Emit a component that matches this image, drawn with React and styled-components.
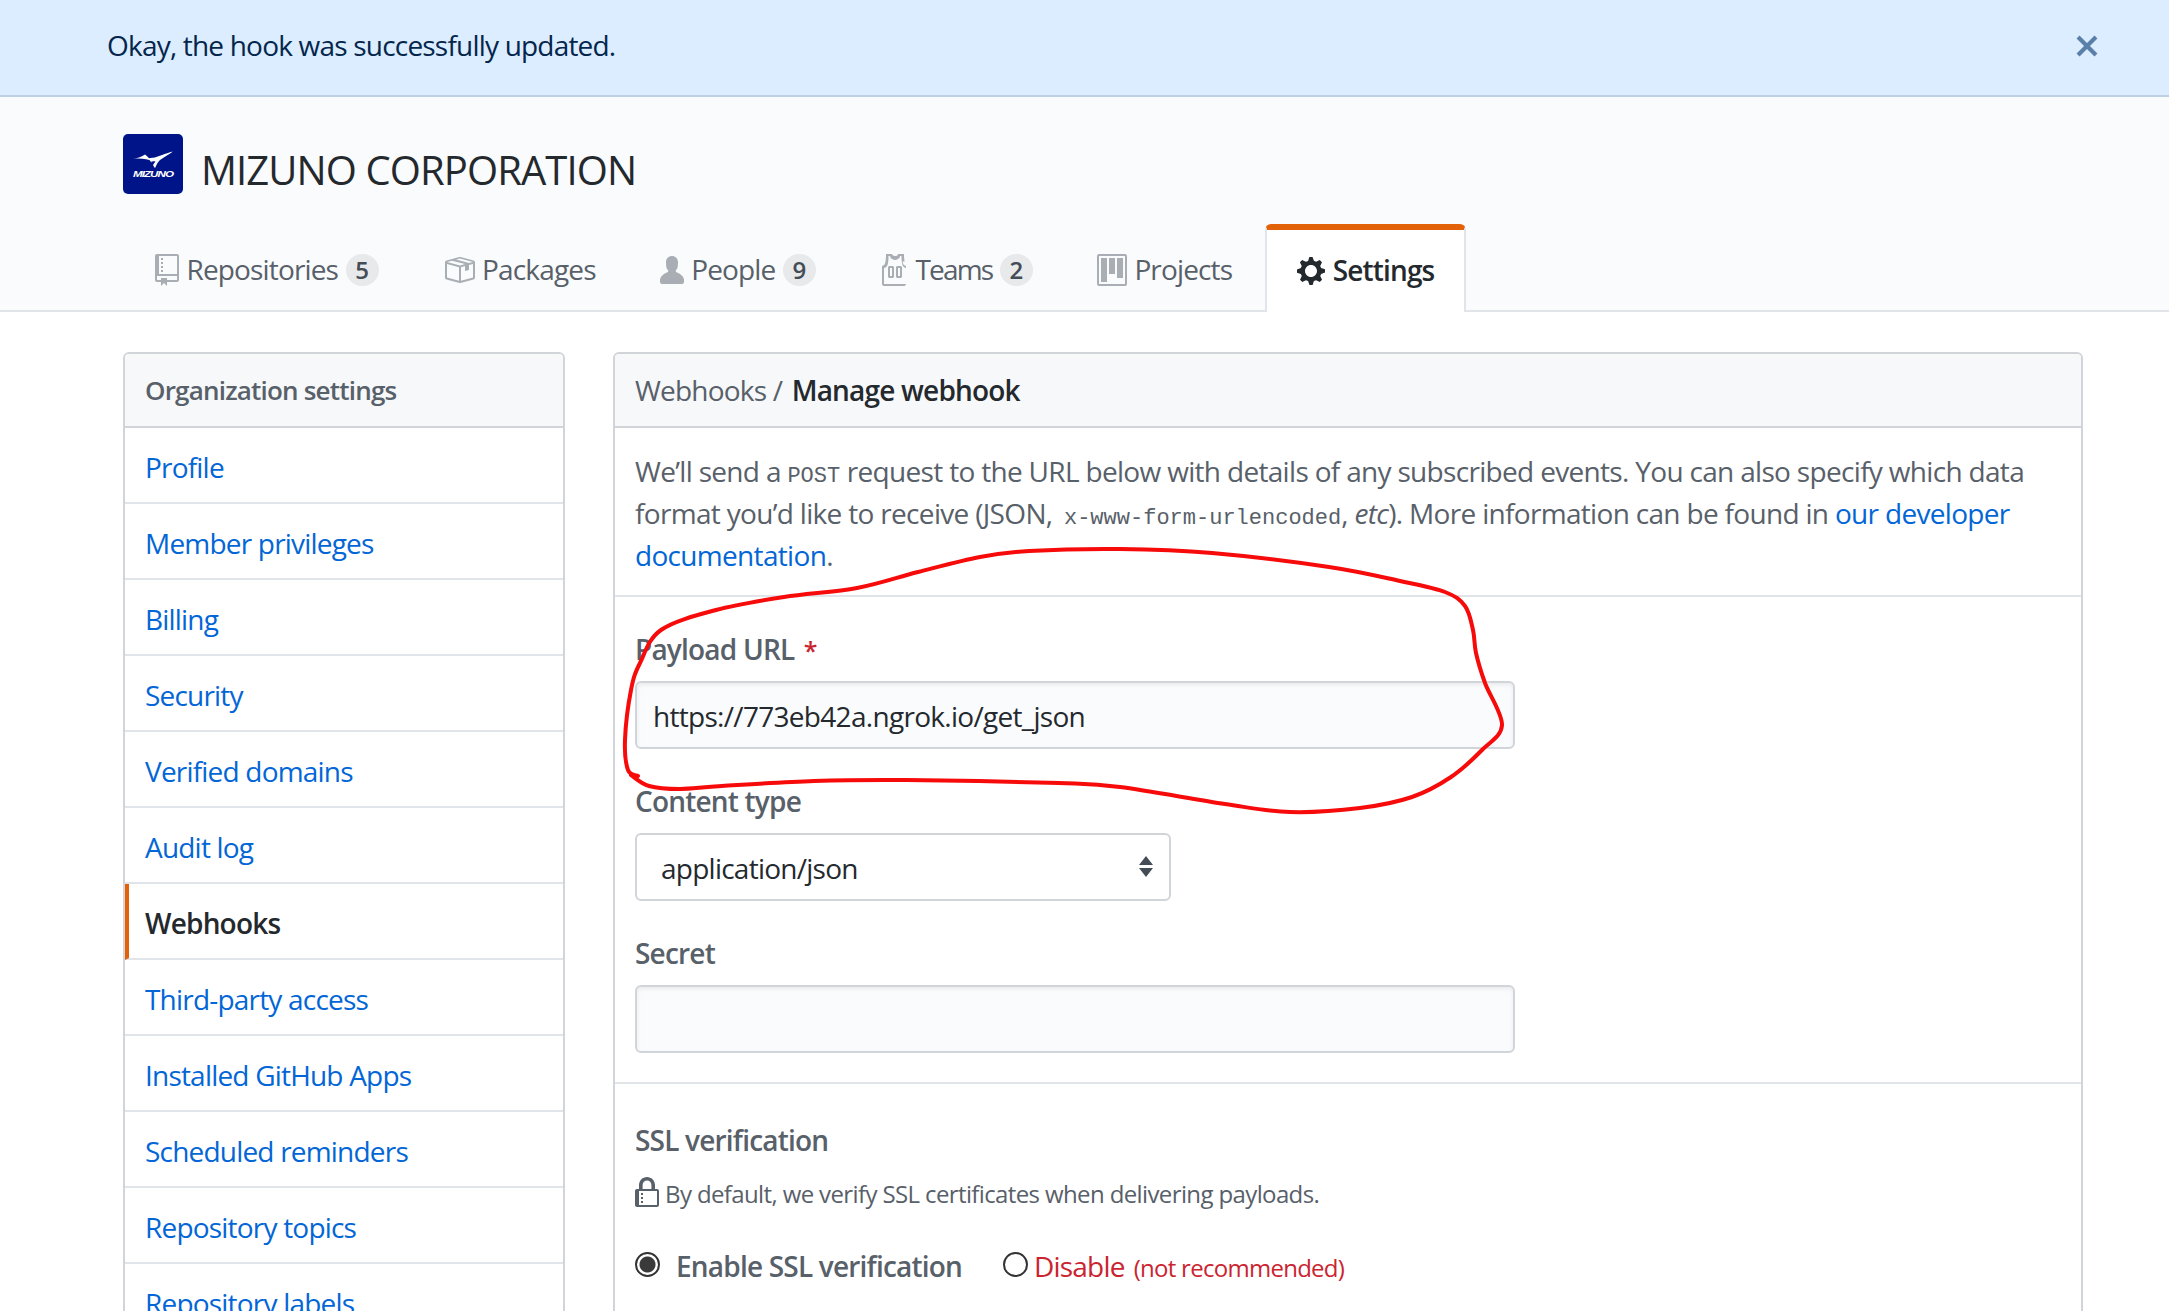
import React from "react";
import styled, { createGlobalStyle } from "styled-components";

const GlobalStyle = createGlobalStyle`
  html, body {
    margin: 0;
    padding: 0;
    height: 100%;
    overflow: hidden;
    background: #fff;
  }
  #root {
    height: 100%;
  }
  * {
    box-sizing: border-box;
  }
`;

const SANS = `"Open Sans", "Noto Sans", "Liberation Sans", sans-serif`;
const MONO = `"Liberation Mono", "DejaVu Sans Mono", monospace`;

const Page = styled.div`
  position: relative;
  height: 1311px;
  overflow: hidden;
  font-family: ${SANS};
  font-size: 28px;
  color: #24292e;
  letter-spacing: -0.8px;
`;

const Flash = styled.div`
  display: flex;
  align-items: center;
  justify-content: space-between;
  height: 97px;
  padding: 0 70px 5px 107px;
  background: #dbedff;
  border-bottom: 2px solid #bccfe5;
  color: #05264c;
`;

const CloseIcon = styled.svg`
  width: 24px;
  height: 32px;
  fill: #5a7fa8;
  margin-top: 1px;
`;

const Header = styled.header`
  padding: 37px 0 0 123px;
  background: #fafbfc;
  border-bottom: 2px solid #e1e4e8;
`;

const OrgRow = styled.div`
  display: flex;
  align-items: center;
  gap: 18px;
  height: 60px;
  margin-bottom: 30px;
`;

const OrgLogo = styled.svg`
  width: 60px;
  height: 60px;
  flex: none;
`;

const OrgName = styled.h1`
  margin: 12px 0 0;
  font-size: 40px;
  font-weight: 400;
  line-height: 60px;
  letter-spacing: -0.9px;
`;

const Tabs = styled.nav`
  display: flex;
  margin-bottom: -2px;
`;

const Tab = styled.a`
  display: flex;
  align-items: center;
  gap: 7.5px;
  height: 88px;
  padding: ${p => (p.$active ? "0 30px" : "4px 32px 0")};
  margin-left: ${p => (p.$active ? "1px" : "0")};
  color: ${p => (p.$active ? "#24292e" : "#586069")};
  font-weight: ${p => (p.$active ? 600 : 400)};
  background: ${p => (p.$active ? "#fff" : "transparent")};
  border: ${p => (p.$active ? "2px solid #e1e4e8" : "none")};
  border-top: ${p => (p.$active ? "6px solid #e36209" : "none")};
  border-bottom: none;
  border-radius: ${p => (p.$active ? "6px 6px 0 0" : "0")};
`;

const TabIcon = styled.svg`
  height: 32px;
  flex: none;
  fill: ${p => (p.$active ? "#24292e" : "#a8aeb4")};
`;

const TabLabel = styled.span`
  margin-bottom: 3px;
  letter-spacing: ${p => p.$spacing || "-0.85px"};
`;

const Count = styled.span`
  display: inline-block;
  min-width: 33px;
  height: 32px;
  line-height: 32px;
  text-align: center;
  border-radius: 16px;
  background: rgba(27, 31, 35, 0.08);
  color: #444d56;
  font-size: 24px;
  font-weight: 600;
  letter-spacing: 0;
`;

const Layout = styled.div`
  display: grid;
  grid-template-columns: 442px 1470px;
  gap: 48px;
  padding: 40px 0 0 123px;
`;

const Panel = styled.section`
  border: 2px solid #d1d5da;
  border-radius: 6px 6px 0 0;
`;

const PanelHead = styled.div`
  display: flex;
  align-items: center;
  height: 74px;
  padding: 0 20px;
  background: #f6f8fa;
  border-bottom: 2px solid #d1d5da;
  border-radius: 4px 4px 0 0;
  color: #586069;
  font-weight: ${p => (p.$bold ? 600 : 400)};
  font-size: ${p => (p.$bold ? "26px" : "28px")};
  white-space: pre;
`;

const Strong = styled.span`
  margin-left: 3px;
  color: #24292e;
  font-weight: 600;
`;

const MenuItem = styled.a`
  display: flex;
  align-items: center;
  height: 76px;
  padding-top: 4px;
  padding-left: ${p => (p.$active ? "16px" : "20px")};
  border-left: ${p => (p.$active ? "4px solid #e36209" : "none")};
  border-bottom: 2px solid #e1e4e8;
  color: ${p => (p.$active ? "#24292e" : "#0366d6")};
  font-weight: ${p => (p.$active ? 600 : 400)};
`;

const Section = styled.div`
  padding: ${p => p.$pad};
  border-bottom: 2px solid #e1e4e8;
`;

const Intro = styled.p`
  margin: 0;
  color: #586069;
  line-height: 42px;
  letter-spacing: -0.68px;
  white-space: nowrap;
`;

const Code = styled.code`
  margin-left: ${p => p.$shift || "0"};
  font-family: ${MONO};
  font-size: 22px;
  line-height: 0;
  letter-spacing: 0;
`;

const Link = styled.a`
  color: #0366d6;
`;

const Field = styled.div`
  margin-bottom: ${p => p.$gap || "34px"};
`;

const Label = styled.label`
  display: block;
  height: 36px;
  line-height: 36px;
  margin-bottom: 14px;
  color: #586069;
  font-weight: 600;
`;

const Required = styled.span`
  margin-left: 3px;
  font-size: 25px;
  color: #cb2431;
`;

const TextInput = styled.input`
  display: block;
  width: 880px;
  height: 68px;
  padding: 2px 16px 0;
  background: #fafbfc;
  border: 2px solid #d1d5da;
  border-radius: 6px;
  box-shadow: inset 0 2px 4px rgba(27, 31, 35, 0.075);
  font-family: ${SANS};
  font-size: 28px;
  letter-spacing: -0.7px;
  color: #24292e;
  outline: none;
`;

const SelectWrap = styled.div`
  position: relative;
  width: 536px;
`;

const Select = styled.select`
  display: block;
  width: 100%;
  height: 68px;
  padding: 2px 50px 0 24px;
  appearance: none;
  background: #fff;
  border: 2px solid #d1d5da;
  border-radius: 6px;
  font-family: ${SANS};
  font-size: 28px;
  letter-spacing: -0.75px;
  color: #24292e;
  outline: none;
`;

const SelectArrows = styled.svg`
  position: absolute;
  top: 23px;
  right: 17px;
  width: 16px;
  height: 22px;
  fill: #444d56;
  pointer-events: none;
`;

const SslTitle = styled.h3`
  margin: 0 0 19px;
  height: 36px;
  line-height: 36px;
  font-size: 28px;
  font-weight: 600;
  color: #586069;
`;

const SslNote = styled.p`
  display: flex;
  align-items: center;
  gap: 6px;
  margin: 0 0 37px;
  height: 32px;
  font-size: 24px;
  letter-spacing: -0.62px;
  color: #586069;
`;

const LockIcon = styled.svg`
  width: 24px;
  height: 32px;
  flex: none;
  fill: #586069;
`;

const RadioRow = styled.div`
  display: flex;
  align-items: center;
  height: 40px;
`;

const RadioLabel = styled.label`
  display: flex;
  align-items: center;
  gap: ${p => p.$gap};
  margin-right: ${p => p.$right || "0"};
  font-weight: ${p => (p.$danger ? 400 : 600)};
  color: ${p => (p.$danger ? "#cb2431" : "#586069")};
`;

const Radio = styled.input`
  width: 25px;
  height: 25px;
  margin: 0 0 3px;
  appearance: none;
  border: 2px solid #333;
  border-radius: 50%;
  background: #fff;
  &:checked {
    background: radial-gradient(circle, #3a3a3a 0 7.5px, #fff 8.5px);
  }
`;

const Note = styled.small`
  margin-left: 9px;
  font-size: 24px;
  letter-spacing: -0.72px;
`;

const Scribble = styled.svg`
  position: absolute;
  inset: 0;
  width: 2169px;
  height: 1311px;
  fill: none;
  stroke: #f60a0a;
  stroke-width: 4px;
  stroke-linecap: round;
  pointer-events: none;
`;

const ICONS = {
  repo: ["0 0 12 16", "M4 9H3V8h1v1zm0-3H3v1h1V6zm0-2H3v1h1V4zm0-2H3v1h1V2zm8-1v12c0 .55-.45 1-1 1H6v2l-1.5-1.5L3 16v-2H1c-.55 0-1-.45-1-1V1c0-.55.45-1 1-1h10c.55 0 1 .45 1 1zm-1 10H1v2h2v-1h3v1h5v-2zm0-10H2v9h9V1z"],
  package: ["0 0 16 16", "M1 4.27v7.47c0 .45.3.84.75.97l6.5 1.73c.16.05.34.05.5 0l6.5-1.73c.45-.13.75-.52.75-.97V4.27c0-.45-.3-.84-.75-.97l-6.5-1.74a1.4 1.4 0 00-.5 0L1.75 3.3c-.45.13-.75.52-.75.97zm7 9.09l-6-1.59V5l6 1.61v6.75zM2 4l2.5-.67L11 5.06l-2.5.67L2 4zm13 7.77l-6 1.59V6.61l2-.55V8.5l2-.53V5.53L15 5v6.77zm-2-7.24L6.5 2.8l2-.53L15 4l-2 .53z"],
  person: ["0 0 12 16", "M12 14.002a.998.998 0 01-.998.998H1.001A1 1 0 010 13.999V13c0-2.633 4-4 4-4s.229-.409 0-1c-.841-.62-.944-1.59-1-4 .173-2.413 1.867-3 3-3s2.827.586 3 3c-.056 2.41-.159 3.38-1 4-.229.59 0 1 0 1s4 1.367 4 4v1.002z"],
  jersey: ["0 0 14 16", "M4.5 6l-.5.5v5l.5.5h2l.5-.5v-5L6.5 6h-2zM6 11H5V7h1v4zm6.27-7.25C12.05 2.37 11.96 1.12 12 0H9.02c0 .27-.13.48-.39.69-.25.2-.63.3-1.13.3-.48 0-.84-.11-1.09-.31-.25-.2-.38-.42-.38-.69H3c.05 1.13-.03 2.38-.25 3.75C2.55 5.13 1.95 5.88 1 6v9c0 .55.45 1 1 1h10c.55 0 1-.45 1-1V6c-.95-.13-1.53-.88-1.75-2.25h.02zM12 15H2V7c1.13-.12 1.8-.94 2-2.5.22-1.37.3-2.5.25-3.5H5c.03.4.17.75.41 1.06.41.57 1.16.94 2.09.94.91 0 1.66-.37 2.09-.94.23-.31.38-.66.41-1.06h.75c-.05 1 .03 2.13.25 3.5.2 1.56.86 2.38 2 2.5v8zm-3.5-9l-.5.5v5l.5.5h2l.5-.5v-5l-.5-.5h-2zM10 11H9V7h1v4z"],
  project: ["0 0 15 16", "M10 12h3V2h-3v10zm-4-2h3V2H6v8zm-4 4h3V2H2v12zm-1 1h13V1H1v14zM14 0H1a1 1 0 00-1 1v14a1 1 0 001 1h13a1 1 0 001-1V1a1 1 0 00-1-1z"],
  gear: ["0 0 14 16", "M14 8.77v-1.6l-1.94-.64-.45-1.09.88-1.84-1.13-1.13-1.81.91-1.09-.45-.69-1.92h-1.6l-.63 1.94-1.11.45-1.84-.88-1.13 1.13.91 1.81-.45 1.09L0 7.23v1.59l1.94.64.45 1.09-.88 1.84 1.13 1.13 1.81-.91 1.09.45.69 1.92h1.59l.63-1.94 1.11-.45 1.84.88 1.13-1.13-.92-1.81.47-1.09L14 8.75v.02zM7 11c-1.66 0-3-1.34-3-3s1.34-3 3-3 3 1.34 3 3-1.34 3-3 3z"],
};

const TABS = [
  { label: "Repositories", icon: "repo", count: 5 },
  { label: "Packages", icon: "package" },
  { label: "People", icon: "person", count: 9 },
  { label: "Teams", icon: "jersey", count: 2, spacing: "-1.8px" },
  { label: "Projects", icon: "project" },
  { label: "Settings", icon: "gear", active: true },
];

const MENU = [
  "Profile",
  "Member privileges",
  "Billing",
  "Security",
  "Verified domains",
  "Audit log",
  "Webhooks",
  "Third-party access",
  "Installed GitHub Apps",
  "Scheduled reminders",
  "Repository topics",
  "Repository labels",
];

// hand drawn circle round the payload url, points in page pixels
const SCRIBBLE = [
  [638, 776], [628, 770], [625, 740], [631, 690], [640, 663], [661, 630], [716, 610],
  [784, 597], [857, 588], [918, 572], [980, 557], [1029, 551], [1120, 549], [1212, 553],
  [1329, 567], [1400, 581], [1445, 592], [1465, 606], [1473, 630], [1476, 653], [1485, 683], [1502, 725],
  [1482, 750], [1451, 777], [1412, 797], [1360, 808], [1290, 812], [1225, 804], [1120, 787],
  [1059, 783], [906, 780], [814, 781], [722, 786], [680, 789], [649, 786], [631, 775],
];

function smoothPath(points) {
  let d = `M${points[0][0]} ${points[0][1]}`;
  for (let i = 0; i < points.length - 1; i++) {
    const p0 = points[i - 1] || points[i];
    const p1 = points[i];
    const p2 = points[i + 1];
    const p3 = points[i + 2] || p2;
    const c1 = [p1[0] + (p2[0] - p0[0]) / 6, p1[1] + (p2[1] - p0[1]) / 6];
    const c2 = [p2[0] - (p3[0] - p1[0]) / 6, p2[1] - (p3[1] - p1[1]) / 6];
    d += `C${c1[0]} ${c1[1]} ${c2[0]} ${c2[1]} ${p2[0]} ${p2[1]}`;
  }
  return d;
}

function App() {
  return (
    <Page>
      <GlobalStyle />
      <Flash>
        Okay, the hook was successfully updated.
        <CloseIcon viewBox="0 0 12 16">
          <path d="M7.48 8l3.75 3.75-1.48 1.48L6 9.48l-3.75 3.75-1.48-1.48L4.52 8 .77 4.25l1.48-1.48L6 6.52l3.75-3.75 1.48 1.48L7.48 8z" />
        </CloseIcon>
      </Flash>

      <Header>
        <OrgRow>
          <OrgLogo viewBox="0 0 60 60">
            <rect width="60" height="60" rx="5" fill="#001489" />
            <path
              fill="#fff"
              d="M10 24.5c4-.3 8-1.2 12-4 1.5 1 2.8 2.4 4 3.8 1.6-.6 3-.7 4.6-.5 5.5-1.5 11-4 19.4-6.3-4.5 3-8 5.4-11.5 7.4-1.6 1-3 2.5-4 4-1 1.8-1.9 3.6-2.5 5.3-1.7-2.7-3.4-5.7-5.5-8.2-5-1.6-11-1.5-16.5-1.5zm20.5 2.8c-1.2 0-2 .2-2.6.7.8 1 1.5 2 2.2 3.1.6-1.4 1.4-2.6 2.4-3.7-.7 0-1.3-.1-2-.1z"
            />
            <text
              x="30"
              y="42.5"
              textAnchor="middle"
              fontFamily="Liberation Sans, sans-serif"
              fontSize="9.5"
              fontWeight="700"
              fontStyle="italic"
              textLength="40"
              lengthAdjust="spacingAndGlyphs"
              fill="#fff"
            >
              MIZUNO
            </text>
          </OrgLogo>
          <OrgName>MIZUNO CORPORATION</OrgName>
        </OrgRow>
        <Tabs>
          {TABS.map(tab => (
            <Tab key={tab.label} $active={tab.active}>
              <TabIcon
                viewBox={ICONS[tab.icon][0]}
                width={ICONS[tab.icon][0].split(" ")[2] * 2}
                $active={tab.active}
              >
                <path fillRule="evenodd" d={ICONS[tab.icon][1]} />
              </TabIcon>
              <TabLabel $spacing={tab.spacing}>{tab.label}</TabLabel>
              {tab.count && <Count>{tab.count}</Count>}
            </Tab>
          ))}
        </Tabs>
      </Header>

      <Layout>
        <Panel>
          <PanelHead $bold>Organization settings</PanelHead>
          {MENU.map(item => (
            <MenuItem key={item} $active={item === "Webhooks"}>
              {item}
            </MenuItem>
          ))}
        </Panel>

        <Panel>
          <PanelHead>
            Webhooks / <Strong>Manage webhook</Strong>
          </PanelHead>
          <Section $pad="22px 20px 19px">
            <Intro>
              We’ll send a <Code>POST</Code> request to the URL below with details of any subscribed events. You can also specify which data
              <br />
              format you’d like to receive (JSON, <Code $shift="5px">x-www-form-urlencoded</Code>, <em>etc</em>). More information can be found in <Link>our developer</Link>
              <br />
              <Link>documentation</Link>.
            </Intro>
          </Section>
          <Section $pad="34px 20px 29px">
            <Field>
              <Label>
                Payload URL <Required>*</Required>
              </Label>
              <TextInput defaultValue="https://773eb42a.ngrok.io/get_json" />
            </Field>
            <Field>
              <Label>Content type</Label>
              <SelectWrap>
                <Select defaultValue="json">
                  <option value="json">application/json</option>
                </Select>
                <SelectArrows viewBox="0 0 16 22">
                  <path d="M8 0l7 9H1zM8 21l7-9H1z" />
                </SelectArrows>
              </SelectWrap>
            </Field>
            <Field $gap="0">
              <Label>Secret</Label>
              <TextInput />
            </Field>
          </Section>
          <Section $pad="38px 20px 30px">
            <SslTitle>SSL verification</SslTitle>
            <SslNote>
              <LockIcon viewBox="0 0 12 16">
                <path fillRule="evenodd" d="M4 13H3v-1h1v1zm8-6v7c0 .55-.45 1-1 1H1c-.55 0-1-.45-1-1V7c0-.55.45-1 1-1h1V4c0-2.2 1.8-4 4-4s4 1.8 4 4v2h1c.55 0 1 .45 1 1zM3.8 6h4.41V4c0-1.22-.98-2.2-2.2-2.2-1.22 0-2.2.98-2.2 2.2v2H3.8zM11 7H2v7h9V7zM4 8H3v1h1V8zm0 2H3v1h1v-1z" />
              </LockIcon>
              By default, we verify SSL certificates when delivering payloads.
            </SslNote>
            <RadioRow>
              <RadioLabel $gap="16px" $right="41px">
                <Radio type="radio" name="ssl" defaultChecked />
                Enable SSL verification
              </RadioLabel>
              <RadioLabel $gap="6px" $danger>
                <Radio type="radio" name="ssl" />
                <span>
                  Disable<Note>(not recommended)</Note>
                </span>
              </RadioLabel>
            </RadioRow>
          </Section>
        </Panel>
      </Layout>

      <Scribble viewBox="0 0 2169 1311">
        <path d={smoothPath(SCRIBBLE)} />
      </Scribble>
    </Page>
  );
}

export default App;
